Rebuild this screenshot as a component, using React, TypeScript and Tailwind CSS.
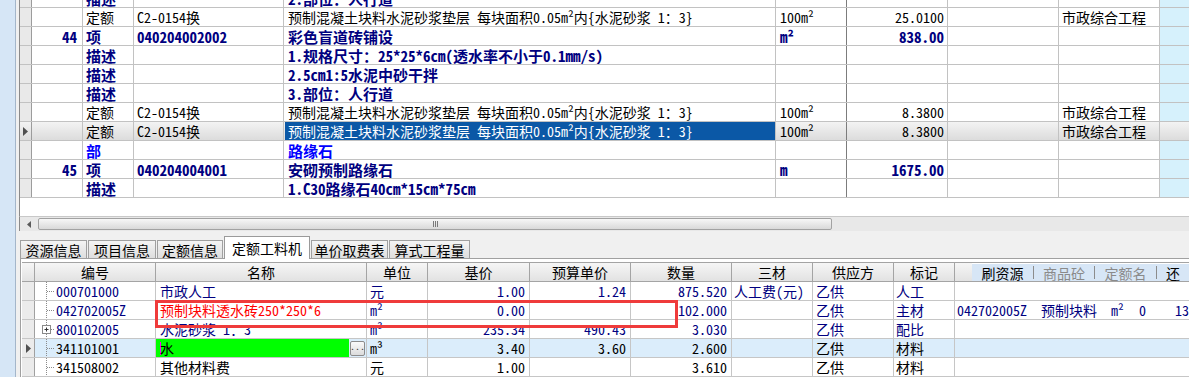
import React from 'react';

type TopRow = {
  no?: string;
  kind: string;
  code?: string;
  name: string;
  unit?: string;
  qty?: string;
  spec?: string;
  style: 'bold' | 'part' | 'plain';
  selected?: boolean;
};

const quotaName = '预制混凝土块料水泥砂浆垫层 每块面积0.05m²内{水泥砂浆 1：3}';

const topRows: TopRow[] = [
  { kind: '描述', name: '2.部位：人行道', style: 'bold' },
  { kind: '定额', code: 'C2-0154换', name: quotaName, unit: '100m²', qty: '25.0100', spec: '市政综合工程', style: 'plain' },
  { no: '44', kind: '项', code: '040204002002', name: '彩色盲道砖铺设', unit: 'm²', qty: '838.00', style: 'bold' },
  { kind: '描述', name: '1.规格尺寸：25*25*6cm(透水率不小于0.1mm/s)', style: 'bold' },
  { kind: '描述', name: '2.5cm1:5水泥中砂干拌', style: 'bold' },
  { kind: '描述', name: '3.部位：人行道', style: 'bold' },
  { kind: '定额', code: 'C2-0154换', name: quotaName, unit: '100m²', qty: '8.3800', spec: '市政综合工程', style: 'plain' },
  { kind: '定额', code: 'C2-0154换', name: quotaName, unit: '100m²', qty: '8.3800', spec: '市政综合工程', style: 'plain', selected: true },
  { kind: '部', name: '路缘石', style: 'part' },
  { no: '45', kind: '项', code: '040204004001', name: '安砌预制路缘石', unit: 'm', qty: '1675.00', style: 'bold' },
  { kind: '描述', name: '1.C30路缘石40cm*15cm*75cm', style: 'bold' },
];

type Part = {
  code: string;
  name: string;
  unit: string;
  base: string;
  budget: string;
  qty: string;
  three?: string;
  supplier: string;
  mark: string;
  navy: boolean;
  red?: boolean;
  plus?: boolean;
  selected?: boolean;
  extra?: boolean;
};

const parts: Part[] = [
  { code: '000701000', name: '市政人工', unit: '元', base: '1.00', budget: '1.24', qty: '875.520', three: '人工费(元)', supplier: '乙供', mark: '人工', navy: true },
  { code: '042702005Z', name: '预制块料透水砖250*250*6', unit: 'm²', base: '0.00', budget: '', qty: '102.000', supplier: '乙供', mark: '主材', navy: true, red: true, extra: true },
  { code: '800102005', name: '水泥砂浆 1：3', unit: 'm³', base: '235.34', budget: '490.43', qty: '3.030', supplier: '乙供', mark: '配比', navy: true, plus: true },
  { code: '341101001', name: '水', unit: 'm³', base: '3.40', budget: '3.60', qty: '2.600', supplier: '乙供', mark: '材料', navy: false, selected: true },
  { code: '341508002', name: '其他材料费', unit: '元', base: '1.00', budget: '', qty: '3.610', supplier: '乙供', mark: '材料', navy: false },
];

function Arrow() {
  return (
    <svg width="5" height="9" viewBox="0 0 5 9">
      <path d="M0 0 L5 4.5 L0 9 Z" fill="#505050" />
    </svg>
  );
}

function TopGridRow({ r }: { r: TopRow }) {
  const tone =
    r.style === 'part'
      ? 'text-[#0000ff] font-bold text-[15px]'
      : r.style === 'bold'
        ? 'text-[#000080] font-bold text-[15px]'
        : 'text-black text-[14px]';
  const bg = r.selected ? 'bg-linear-to-b from-[#f3f3f3] to-[#dcdcdc]' : 'bg-white';
  const cell = 'flex shrink-0 items-center overflow-hidden whitespace-nowrap border-r border-[#c2c2c2]';
  return (
    <div className={`flex h-[19px] border-b border-[#c2c2c2] leading-none ${bg} ${tone}`}>
      <div className={`flex w-[12px] shrink-0 items-center justify-center border-r border-[#9c9c9c] ${r.selected ? '' : 'bg-[#e9e9e9]'}`}>
        {r.selected && <Arrow />}
      </div>
      <div className={`${cell} w-[51px] justify-end pr-[5px]`}>{r.no}</div>
      <div className={`${cell} w-[51px] pl-[3px]`}>{r.kind}</div>
      <div className={`${cell} w-[150px] pl-[3px]`}>{r.code}</div>
      <div className={`${cell} w-[492px] pl-[1px]`}>
        <span className={r.selected ? 'flex h-full flex-1 items-center bg-[#0b58a6] pl-[3px] text-white' : 'pl-[3px]'}>{r.name}</span>
      </div>
      <div className={`${cell} w-[71px] border-r-[#7c7c7c] pl-[4px]`}>{r.unit}</div>
      <div className={`${cell} w-[101px] justify-end pr-[3px]`}>{r.qty}</div>
      <div className={`${cell} w-[111px]`} />
      <div className={`${cell} w-[101px] pl-[3px]`}>{r.spec}</div>
      <div className={`flex-1 ${r.selected ? '' : 'bg-[#d6f1fc]'}`} />
    </div>
  );
}

function Tree({ plus }: { plus?: boolean }) {
  return (
    <svg width="21" height="19" viewBox="0 0 21 19" className="shrink-0">
      <line x1="11.5" y1="0" x2="11.5" y2="19" stroke="#8a8a8a" strokeDasharray="1 1" />
      <line x1="12" y1="9.5" x2="19" y2="9.5" stroke="#8a8a8a" strokeDasharray="1 1" />
      {plus && (
        <g>
          <rect x="7.5" y="5.5" width="8" height="8" fill="#ffffff" stroke="#8a8a8a" />
          <line x1="9.5" y1="9.5" x2="13.5" y2="9.5" stroke="#333" />
          <line x1="11.5" y1="7.5" x2="11.5" y2="11.5" stroke="#333" />
        </g>
      )}
    </svg>
  );
}

function PartRow({ p }: { p: Part }) {
  const text = p.navy ? 'text-[#000080]' : 'text-black';
  const cell = 'flex shrink-0 items-center overflow-hidden whitespace-nowrap border-r border-[#c6c6c6]';
  return (
    <div className={`flex h-[19px] border-b border-[#c6c6c6] text-[14px] leading-none ${p.selected ? 'bg-[#dbedfb]' : 'bg-white'} ${text}`}>
      <div className="flex w-[13px] shrink-0 items-center justify-center border-r border-[#a0a0a0] bg-[#ebebeb]">
        {p.selected && <Arrow />}
      </div>
      <div className={`${cell} w-[121px]`}>
        <Tree plus={p.plus} />
        <span>{p.code}</span>
      </div>
      <div className={`${cell} w-[211px] ${p.red ? 'text-[#ff0000]' : ''}`}>
        {p.selected ? (
          <div className="flex h-full w-full items-center">
            <div className="flex h-full flex-1 items-center bg-[#00ff00] pl-[4px]">
              <span className="mr-[-1px] h-[13px] w-[1px] bg-[#ff00ff]" />
              <span>{p.name}</span>
            </div>
            <div className="mx-[1px] flex h-[15px] w-[15px] items-start justify-center rounded-[2px] border border-[#8c8c8c] bg-linear-to-b from-[#fafafa] to-[#dcdcdc] text-[10px] leading-[8px] text-[#333]">
              ...
            </div>
          </div>
        ) : (
          <span className="pl-[4px]">{p.name}</span>
        )}
      </div>
      <div className={`${cell} w-[61px] pl-[3px]`}>{p.unit}</div>
      <div className={`${cell} w-[102px] justify-end pr-[4px]`}>{p.base}</div>
      <div className={`${cell} w-[101px] justify-end pr-[4px]`}>{p.budget}</div>
      <div className={`${cell} w-[101px] justify-end pr-[4px]`}>{p.qty}</div>
      <div className={`${cell} w-[81px] pl-[2px]`}>{p.three}</div>
      <div className={`${cell} w-[81px] pl-[3px]`}>{p.supplier}</div>
      <div className={`${cell} w-[61px] pl-[2px]`}>{p.mark}</div>
      <div className="flex flex-1 items-center overflow-hidden whitespace-nowrap pl-[2px] text-[#000080]">
        {p.extra && (
          <>
            <span className="w-[84px] shrink-0">042702005Z</span>
            <span className="w-[70px] shrink-0">预制块料</span>
            <span className="w-[28px] shrink-0">m²</span>
            <span className="w-[36px] shrink-0">0</span>
            <span>13</span>
          </>
        )}
      </div>
    </div>
  );
}

const tabs = [
  { label: '资源信息', w: 'w-[67px]' },
  { label: '项目信息', w: 'w-[68px]' },
  { label: '定额信息', w: 'w-[66px]' },
  { label: '定额工料机', w: 'w-[86px]', active: true },
  { label: '单价取费表', w: 'w-[77px]' },
  { label: '算式工程量', w: 'w-[81px]' },
];

const headers = [
  { label: '编号', w: 'w-[121px]' },
  { label: '名称', w: 'w-[211px]' },
  { label: '单位', w: 'w-[61px]' },
  { label: '基价', w: 'w-[102px]' },
  { label: '预算单价', w: 'w-[101px]' },
  { label: '数量', w: 'w-[101px]' },
  { label: '三材', w: 'w-[81px]' },
  { label: '供应方', w: 'w-[81px]' },
  { label: '标记', w: 'w-[61px]' },
];

export default function App() {
  return (
    <div className="flex h-[377px] w-[1189px] overflow-hidden bg-white font-['Noto_Sans_Mono_CJK_SC','Liberation_Mono','Noto_Sans_CJK_SC',monospace]">
      <div className="w-[16px] shrink-0 border-r border-[#a4b6ca] bg-[#d6e6f6]" />

      <div className="flex min-w-0 flex-1 flex-col bg-[#f0f0f0]">
        {/* upper grid */}
        <div className="ml-[3px] h-[217px] overflow-hidden border-l border-[#8a8a8a] bg-white">
          <div className="-mt-[11px]">
            {topRows.map((r, i) => (
              <TopGridRow key={i} r={r} />
            ))}
          </div>
        </div>

        {/* horizontal scrollbar */}
        <div className="ml-[3px] flex h-[15px] border-l border-t border-[#8a8a8a] border-t-[#c8c8c8] bg-[#e8e8e8]">
          <div className="flex w-[18px] shrink-0 items-center justify-center">
            <svg width="4" height="7" viewBox="0 0 4 7">
              <path d="M4 0 L0 3.5 L4 7 Z" fill="#5a5a5a" />
            </svg>
          </div>
          <div className="my-[1px] flex w-[794px] shrink-0 items-center justify-center rounded-[2px] border border-[#a2a2a2] bg-linear-to-b from-[#f7f7f7] to-[#d9d9d9]">
            <div className="flex gap-[1px]">
              <span className="h-[6px] w-[1px] bg-[#7a7a7a]" />
              <span className="h-[6px] w-[1px] bg-[#7a7a7a]" />
              <span className="h-[6px] w-[1px] bg-[#7a7a7a]" />
            </div>
          </div>
          <div className="flex-1" />
        </div>

        {/* tabs */}
        <div className="flex h-[27px] items-end gap-[1px] pl-[4px] font-['Noto_Sans_CJK_SC',sans-serif] text-[14px] leading-none text-black">
          {tabs.map(t =>
            t.active ? (
              <div
                key={t.label}
                className={`${t.w} relative z-10 -mb-[1px] flex h-[23px] items-center justify-center border border-b-0 border-[#9a9a9a] bg-white`}
              >
                {t.label}
              </div>
            ) : (
              <div
                key={t.label}
                className={`${t.w} flex h-[18px] items-center justify-center border border-b-0 border-[#a0a0a0] bg-linear-to-b from-[#f4f4f4] to-[#dedede]`}
              >
                {t.label}
              </div>
            )
          )}
        </div>

        {/* lower panel */}
        <div className="relative ml-[4px] flex-1 border-l border-t border-[#a0a0a0] bg-white pl-[1px] pt-[3px]">
          <div className="flex h-[20px] border-y border-[#a4a4a4] text-[14px] leading-none text-black">
            <div className="w-[13px] shrink-0 border-r border-[#a4a4a4] bg-linear-to-b from-[#f6f6f6] to-[#e2e2e2]" />
            {headers.map(h => (
              <div
                key={h.label}
                className={`${h.w} flex shrink-0 items-center justify-center border-r border-[#a4a4a4] bg-linear-to-b from-[#f6f6f6] to-[#e2e2e2]`}
              >
                {h.label}
              </div>
            ))}
            <div className="w-[17px] shrink-0 bg-linear-to-b from-[#f6f6f6] to-[#e2e2e2]" />
            <div className="flex flex-1 items-start bg-white pt-[1px]">
              <div className="flex h-[17px] flex-1 items-center bg-[#d7e6f6]">
                <div className="flex h-[13px] w-[62px] shrink-0 items-center justify-center border-r border-[#8c8c8c]">刷资源</div>
                <div className="flex h-[13px] w-[61px] shrink-0 items-center justify-center border-r border-[#8c8c8c] text-[#8a8a8a]">商品砼</div>
                <div className="flex h-[13px] w-[62px] shrink-0 items-center justify-center border-r border-[#8c8c8c] text-[#8a8a8a]">定额名</div>
                <div className="flex-1 pl-[9px]">还</div>
              </div>
            </div>
          </div>
          {parts.map(p => (
            <PartRow key={p.code} p={p} />
          ))}

          <div className="absolute left-[134px] top-[41px] h-[28px] w-[523px] border-[3px] border-[#ef3b3b]" />
        </div>
      </div>
    </div>
  );
}
